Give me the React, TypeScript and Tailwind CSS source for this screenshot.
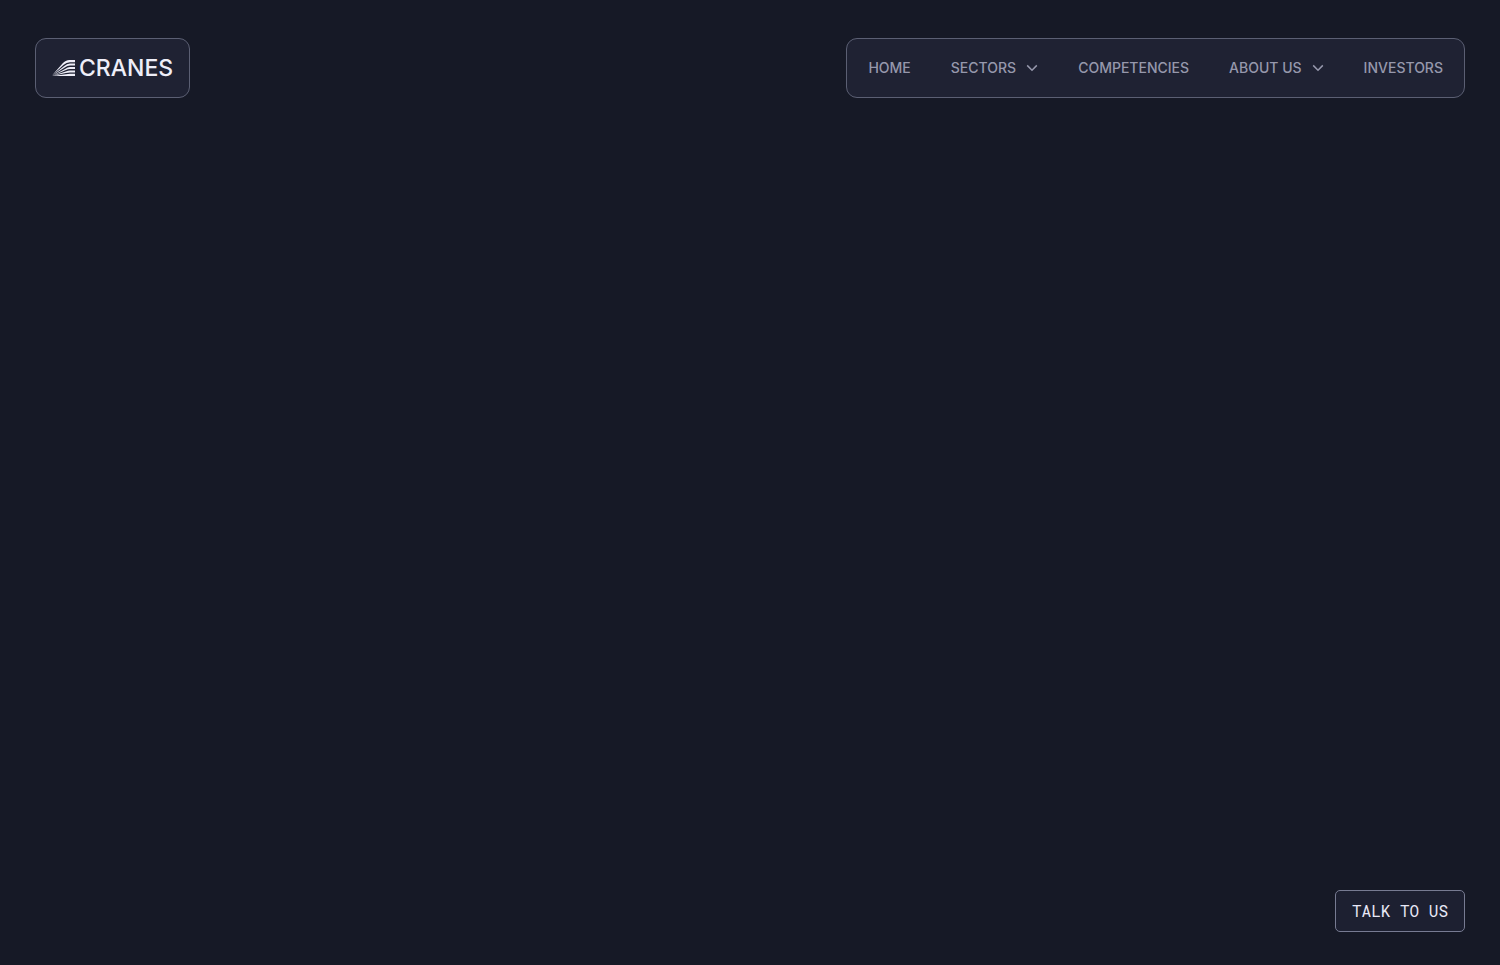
import React from 'react';

interface NavItem {
  label: string;
  href: string;
  hasMenu?: boolean;
}

const navItems: NavItem[] = [
  { label: 'HOME', href: '#home' },
  { label: 'SECTORS', href: '#sectors', hasMenu: true },
  { label: 'COMPETENCIES', href: '#competencies' },
  { label: 'ABOUT US', href: '#about', hasMenu: true },
  { label: 'INVESTORS', href: '#investors' },
];

const Chevron = () => (
  <svg width="12" height="8" viewBox="0 0 12 8" fill="none" aria-hidden="true">
    <path d="M1.2 1.4 L6 6.2 L10.8 1.4" stroke="currentColor" strokeWidth="1.5" />
  </svg>
);

// Wing made of five feathers that fan out from the lower left
const Wing = () => (
  <svg width="23" height="16" viewBox="0 0 23 16" fill="currentColor" aria-hidden="true">
    <path d="M0 15.6 L10.5 3.6 Q13.6 0 17.5 0 H23 V2.2 H18 Q14.4 2.2 11.4 5 Z" />
    <path d="M0.3 15.6 L12 6.2 Q15 3.6 18 3.6 H23 V5.6 H18 Q15.4 5.6 12.8 7.4 Z" />
    <path d="M0.6 15.7 L13 9 Q15.8 7 18 7 H23 V9 H18 Q16 9 13.4 10.2 Z" />
    <path d="M0.9 15.7 L13.8 11.6 Q16.2 10.4 18 10.4 H23 V12.4 H18 Q16 12.4 14 12.9 Z" />
    <path d="M0 16 L14 14.2 Q16 13.8 18 13.8 H23 V16 Z" />
  </svg>
);

const App = () => {
  return (
    <div className="min-h-screen bg-[#161926] px-[35px] pt-[38px] pb-[33px] flex flex-col justify-between font-['Inter','Liberation_Sans',sans-serif]">
      <header className="flex items-center justify-between">
        <a
          href="#home"
          className="flex h-[60px] items-center gap-1 rounded-[11px] border border-[#5b5f73] bg-[#1f2233] px-4 text-[#eeeef8]"
        >
          <Wing />
          <span className="text-[23px] leading-none font-medium">CRANES</span>
        </a>

        <nav className="flex h-[60px] items-center gap-10 rounded-[11px] border border-[#5b5f73] bg-[#1f2233] px-[21px] text-sm font-medium text-[#9698ac]">
          {navItems.map((item) =>
            item.hasMenu ? (
              <button key={item.label} type="button" className="flex items-center gap-2.5">
                {item.label}
                <Chevron />
              </button>
            ) : (
              <a key={item.label} href={item.href}>
                {item.label}
              </a>
            )
          )}
        </nav>
      </header>

      <button
        type="button"
        className="h-[42px] self-end rounded-[5px] border border-[#777b92] bg-[#1d2031] px-4 font-['Roboto_Mono','DejaVu_Sans_Mono',monospace] text-base text-[#e8e8f6]"
      >
        TALK TO US
      </button>
    </div>
  );
};

export default App;
